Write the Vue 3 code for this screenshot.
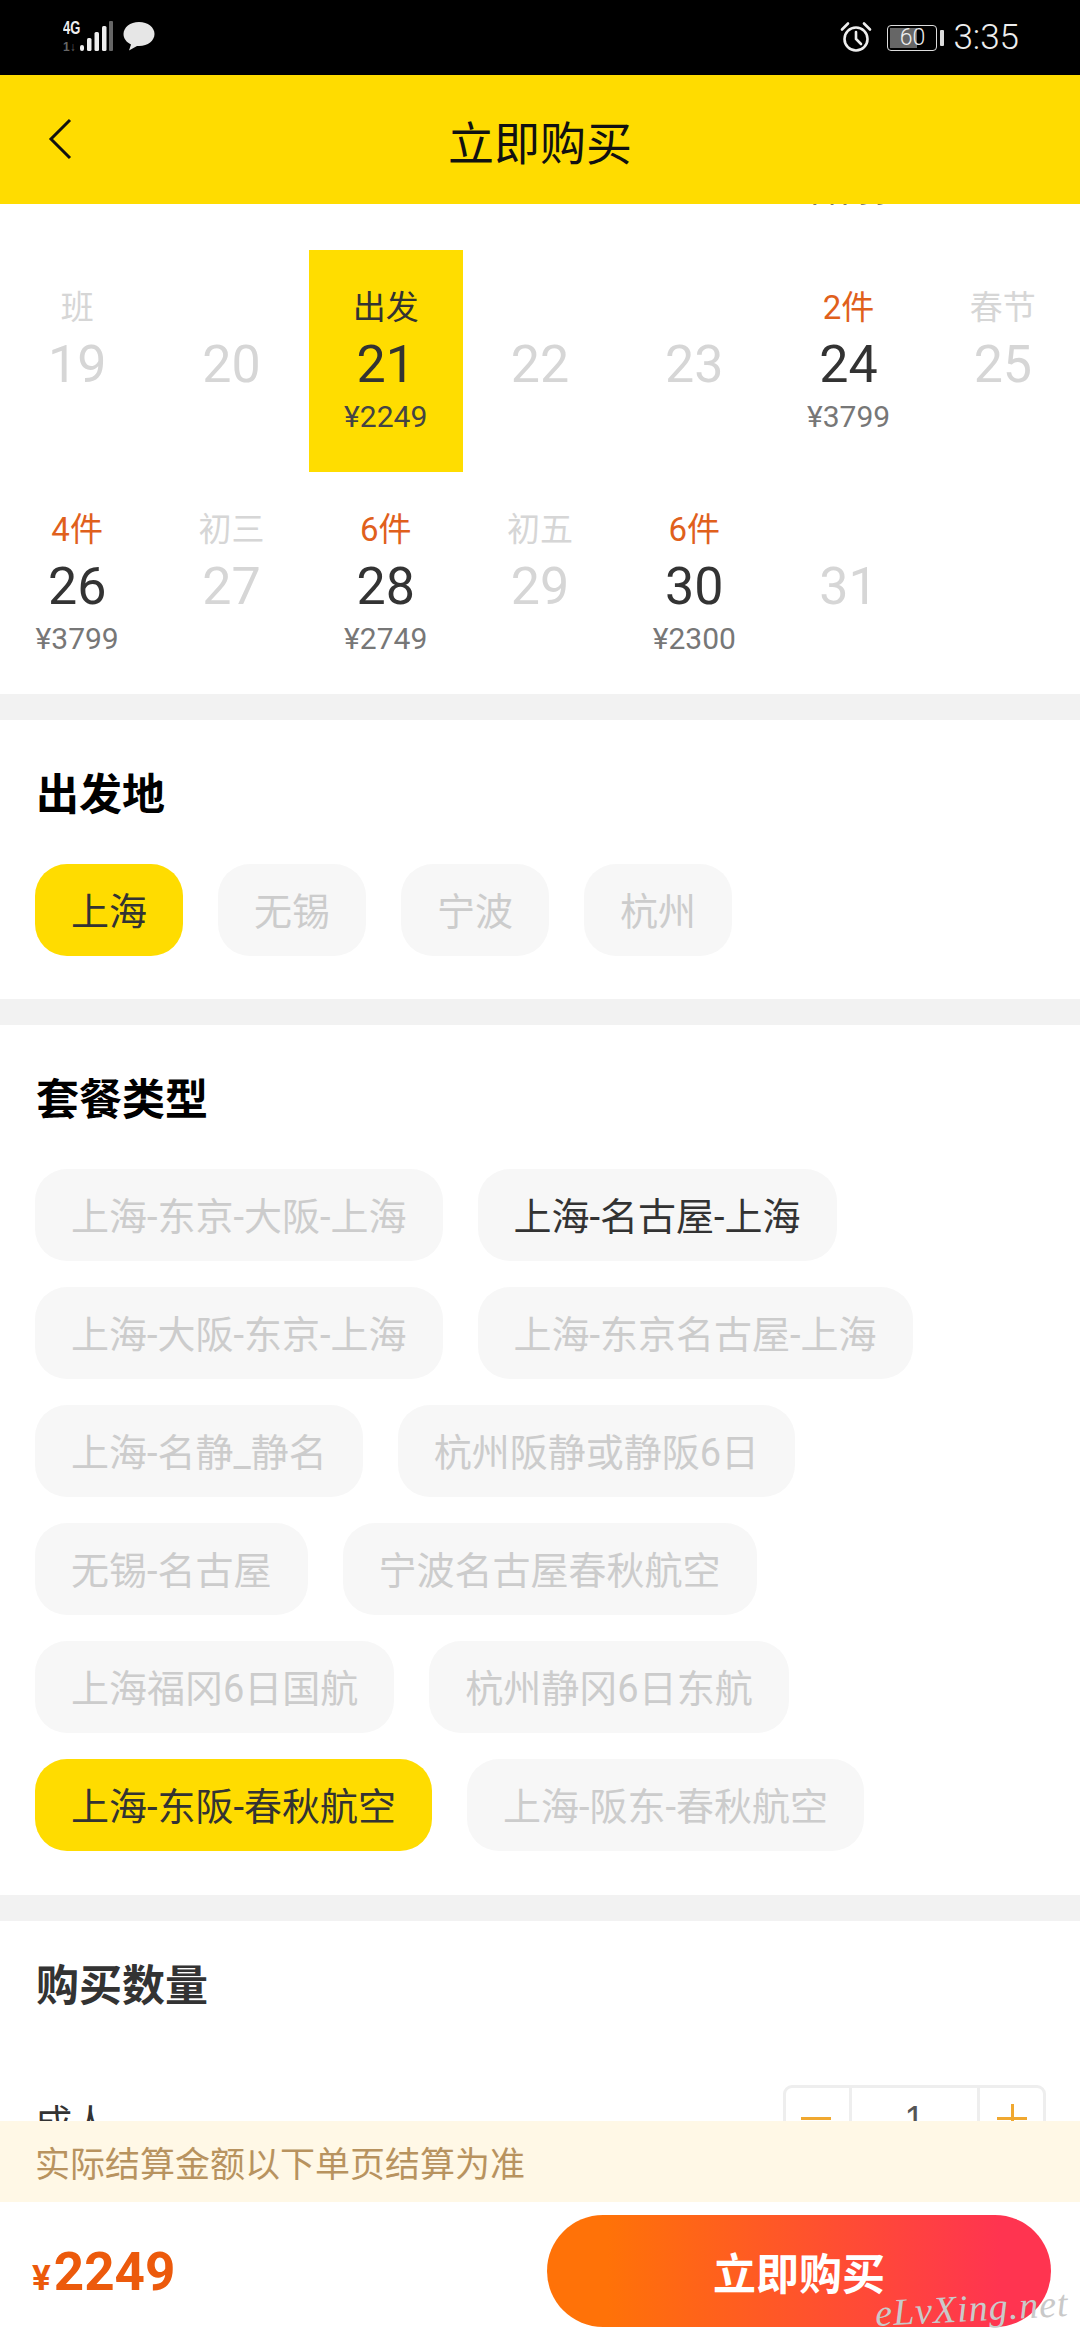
<script setup>
const rows = [
  [{}, {}, {}, {}, {}, { price: '¥1799', hidden: true }, {}],
  [
    { label: '班', day: 19 }, { day: 20 },
    { label: '出发', day: 21, price: '¥2249', selected: true, on: true },
    { day: 22 }, { day: 23 },
    { label: '2件', day: 24, price: '¥3799', on: true, stock: true },
    { label: '春节', day: 25 }
  ],
  [
    { label: '4件', day: 26, price: '¥3799', on: true, stock: true },
    { label: '初三', day: 27 },
    { label: '6件', day: 28, price: '¥2749', on: true, stock: true },
    { label: '初五', day: 29 },
    { label: '6件', day: 30, price: '¥2300', on: true, stock: true },
    { day: 31 }, {}
  ]
]
const cells = rows.flat()
const origins = [
  { t: '上海', c: 'active' }, { t: '无锡' }, { t: '宁波' }, { t: '杭州' }
]
const packages = [
  { t: '上海-东京-大阪-上海' }, { t: '上海-名古屋-上海', c: 'open' },
  { t: '上海-大阪-东京-上海' }, { t: '上海-东京名古屋-上海' },
  { t: '上海-名静_静名' }, { t: '杭州阪静或静阪6日' },
  { t: '无锡-名古屋' }, { t: '宁波名古屋春秋航空' },
  { t: '上海福冈6日国航' }, { t: '杭州静冈6日东航' },
  { t: '上海-东阪-春秋航空', c: 'active' }, { t: '上海-阪东-春秋航空' }
]
</script>

<template>
  <div class="page">
    <div class="status">
      <div class="status-left">
        <div class="net">
          <span class="net-4g">4G</span>
          <span class="net-arrows">1↓</span>
        </div>
        <svg class="bars" width="36" height="34" viewBox="0 0 36 34">
          <rect x="1" y="25" width="4" height="6" rx="2" fill="#eee" />
          <rect x="8" y="18" width="4.5" height="13" rx="1.5" fill="#eee" />
          <rect x="15.500" y="12" width="4.500" height="19" rx="1.500" fill="#eee" />
          <rect x="23" y="6" width="4.500" height="25" rx="1.500" fill="#eee" />
          <rect x="30" y="1" width="4" height="30" rx="1" fill="#666" />
        </svg>
        <svg class="bubble" width="34" height="32" viewBox="0 0 34 32">
          <path d="M17 2C8 2 1.500 7.500 1.500 14c0 4.500 3 8.300 7.500 10.500L7 30.500l8-4.600c.7.100 1.300.1 2 .1 9 0 15.500-5.500 15.500-12S26 2 17 2z" fill="#e6e6e6" />
        </svg>
      </div>
      <div class="status-right">
        <svg class="alarm" width="34" height="34" viewBox="0 0 34 34" fill="none" stroke="#eee" stroke-width="2.600">
          <circle cx="17" cy="19" r="11.500" />
          <path d="M17 12v7l5 5" stroke-linecap="round" />
          <path d="M3 9.500 9 3.500M31 9.500l-6-6" stroke-linecap="round" />
        </svg>
        <div class="battery">
          <div class="battery-fill"></div>
          <span class="battery-num">60</span>
        </div>
        <div class="battery-nub"></div>
        <span class="clock">3:35</span>
      </div>
    </div>

    <header class="bar">
      <svg class="back" width="24" height="42" viewBox="0 0 24 42" fill="none" stroke="#111" stroke-width="3">
        <path d="M22 2 3 21l19 19" />
      </svg>
      <span class="bar-title">立即购买</span>
    </header>

    <main class="scroller">
      <section class="calendar">
        <div v-for="(c, i) in cells" :key="i" class="cell" :class="{ selected: c.selected, on: c.on }">
          <div class="cell-label" :class="{ stock: c.stock }">{{ c.label }}</div>
          <div class="cell-day">{{ c.day }}</div>
          <div class="cell-price">{{ c.price }}</div>
        </div>
      </section>

      <section class="block first">
        <h2 class="block-title black">出发地</h2>
        <div class="chips">
          <span v-for="o in origins" :key="o.t" class="chip" :class="o.c">{{ o.t }}</span>
        </div>
      </section>

      <section class="block first second">
        <h2 class="block-title black">套餐类型</h2>
        <div class="chips">
          <span v-for="p in packages" :key="p.t" class="chip" :class="p.c">{{ p.t }}</span>
        </div>
      </section>

      <section class="block third">
        <h2 class="block-title">购买数量</h2>
        <div class="qty-row">
          <span class="qty-label">成人</span>
          <div class="stepper">
            <div class="step minus"><i class="h"></i></div>
            <div class="step value">1</div>
            <div class="step plus"><i class="h"></i><i class="v"></i></div>
          </div>
        </div>
      </section>
    </main>

    <div class="notice">实际结算金额以下单页结算为准</div>

    <footer class="foot">
      <div class="total"><span class="yen">¥</span><span class="amount">2249</span></div>
      <div class="buy">立即购买</div>
      <span class="mark">eLvXing.net</span>
    </footer>
  </div>
</template>

<style>
html, body { margin: 0; background: #fff; }
</style>

<style scoped>
.page {
  position: relative;
  width: 1080px;
  height: 2340px;
  display: flex;
  flex-direction: column;
  overflow: hidden;
  background: #fff;
  font-family: Roboto, "Noto Sans CJK SC", sans-serif;
}
.status {
  flex: 0 0 75px;
  background: #000;
  color: #eee;
  display: flex;
  align-items: center;
  justify-content: space-between;
  box-sizing: border-box;
  padding: 0 61px 0 63px;
}
.status-left, .status-right { display: flex; align-items: center; }
.net {
  width: 17px;
  height: 34px;
  margin-top: -2px;
  display: flex;
  flex-direction: column;
  font-family: "Liberation Sans", sans-serif;
  font-weight: 700;
  white-space: nowrap;
}
.net-4g {
  font-size: 18px;
  line-height: 16px;
  transform: scaleX(.72);
  transform-origin: left;
}
.net-arrows { font-size: 12px; line-height: 14px; color: #666; margin-top: 4px; }
.bars { margin-left: -1px; margin-top: -2px; }
.bubble { margin-left: 7px; margin-top: -4px; }
.alarm { margin-top: -2px; }
.battery {
  position: relative;
  width: 50px;
  height: 26px;
  margin-left: 14px;
  border: 1.500px solid #ddd;
  border-radius: 4px;
  box-sizing: border-box;
  overflow: hidden;
  display: flex;
  align-items: center;
  justify-content: center;
}
.battery-fill {
  position: absolute;
  left: 2px;
  top: 2px;
  bottom: 2px;
  width: 27px;
  background: #666;
}
.battery-num {
  position: relative;
  font-size: 23px;
  font-weight: 300;
  color: #eee;
  line-height: 1;
}
.battery-nub {
  width: 4px;
  height: 16px;
  margin-left: 3px;
  border-radius: 1px;
  background: #ddd;
}
.clock {
  margin-left: 9px;
  font-size: 35px;
  font-weight: 300;
  color: #eee;
  line-height: 1;
}
.bar {
  flex: 0 0 129px;
  position: relative;
  z-index: 1;
  background: #ffdc00;
  display: flex;
  align-items: center;
  justify-content: center;
}
.back { position: absolute; left: 48px; top: 43px; }
.bar-title {
  font-family: "Noto Sans CJK SC", sans-serif;
  font-size: 46px;
  color: #111;
  margin-top: 1px;
  line-height: 60px;
}
.scroller { flex: 1 1 0; min-height: 0; overflow: hidden; }
.calendar {
  display: grid;
  grid-template-columns: repeat(7, 1fr);
  grid-auto-rows: 222px;
  margin-top: -176px;
}
.cell {
  display: flex;
  flex-direction: column;
  align-items: center;
  padding-top: 37px;
  color: #d6d6d6;
}
.cell.selected { background: #ffdd00; }
.cell-label { height: 42px; line-height: 42px; font-size: 33px; }
.cell-label.stock { color: #e0601c; }
.cell-day { height: 70px; margin-top: 1px; line-height: 70px; font-size: 52px; }
.cell-price { height: 37px; margin-top: -2px; line-height: 37px; font-size: 30px; color: #777; }
.cell.on { color: #333; }
.cell.selected .cell-price { color: #444; }
.block {
  border-top: 26px solid #f2f2f2;
  padding: 41px 34px 44px 35px;
}
.first { padding-bottom: 43px; }
.second { padding-bottom: 44px; }
.third { padding-top: 31px; }
.block-title {
  margin: 0 0 43px 1px;
  font-family: "Noto Sans CJK SC", sans-serif;
  font-size: 43px;
  line-height: 60px;
  font-weight: 700;
  color: #333;
}
.block-title.black { color: #000; }
.chips { display: flex; flex-wrap: wrap; gap: 26px 35px; }
.chip {
  height: 92px;
  line-height: 96px;
  padding: 0 36px;
  border-radius: 32px;
  background: #f7f7f7;
  color: #ccc;
  font-family: Roboto, "Noto Sans CJK SC", sans-serif;
  font-size: 38px;
  white-space: nowrap;
}
.chip.active { background: #ffdc00; color: #333; }
.chip.open { color: #333; }
.qty-row {
  display: flex;
  justify-content: space-between;
  margin-top: 73px;
}
.qty-label {
  font-family: "Noto Sans CJK SC", sans-serif;
  font-size: 37px;
  line-height: 72px;
  color: #333;
}
.stepper {
  display: flex;
  width: 263px;
  height: 68px;
  box-sizing: border-box;
  border: 3px solid #eee;
  border-radius: 9px;
}
.step { position: relative; flex: 0 0 63px; }
.step.value {
  flex: 1;
  border-left: 3px solid #eee;
  border-right: 3px solid #eee;
  text-align: center;
  font-size: 36px;
  line-height: 64px;
  color: #555;
  font-family: "Liberation Sans", sans-serif;
}
.h, .v { position: absolute; background: #f0a830; }
.h { left: 15px; width: 30px; top: 29px; height: 3px; }
.plus .h { left: 17px; }
.v { left: 30.500px; width: 3px; top: 16px; height: 30px; }
.notice {
  flex: 0 0 81px;
  position: relative;
  background: #fff8e6;
  color: #b8935f;
  font-family: "Noto Sans CJK SC", sans-serif;
  font-size: 35px;
  line-height: 81px;
  padding-left: 35px;
}
.foot {
  flex: 0 0 138px;
  position: relative;
  display: flex;
  align-items: center;
  justify-content: space-between;
  padding: 0 29px 0 32px;
  background: #fff;
}
.total {
  color: #ec5a0c;
  font-weight: 700;
  display: flex;
  align-items: baseline;
  margin-top: 2px;
}
.yen { font-size: 35px; margin-right: 3px; }
.amount { font-size: 53px; }
.buy {
  width: 504px;
  height: 112px;
  border-radius: 56px;
  background: linear-gradient(90deg, #ff7208 0%, #ff7208 12%, #ff3450 90%);
  color: #fff;
  font-family: "Noto Sans CJK SC", sans-serif;
  font-size: 43px;
  font-weight: 700;
  line-height: 112px;
  text-align: center;
}
.mark {
  position: absolute;
  left: 875px;
  top: 84px;
  font-family: "Liberation Serif", serif;
  font-style: italic;
  font-size: 38px;
  line-height: 44px;
  color: #c9c9c9;
  white-space: nowrap;
  letter-spacing: 1px;
  transform: rotate(-3deg);
}
</style>
